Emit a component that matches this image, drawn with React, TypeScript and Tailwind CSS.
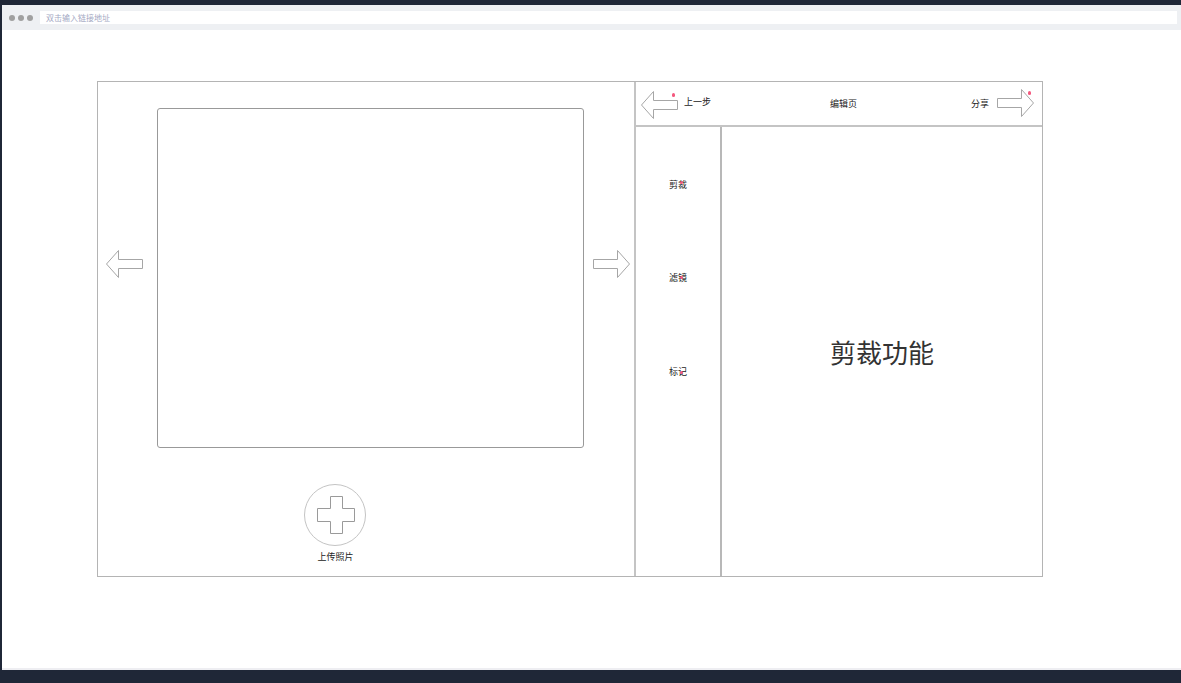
import React from 'react';

const Arrow: React.FC<{ dir: 'left' | 'right'; dot?: boolean }> = ({ dir, dot }) => (
  <div className="relative h-[28px] w-[37px] shrink-0">
    <svg width="37" height="28" viewBox="0 0 37 28" fill="white" stroke="#a6a6a6" strokeWidth="1">
      {dir === 'left' ? (
        <path d="M0.5 14 L12.5 0.5 V9.5 H36.5 V18.5 H12.5 V27.5 Z" />
      ) : (
        <path d="M36.5 14 L24.5 0.5 V9.5 H0.5 V18.5 H24.5 V27.5 Z" />
      )}
    </svg>
    {dot && <span className="absolute top-[2px] right-[3px] h-[4px] w-[3px] rounded-full bg-[#f4587e]" />}
  </div>
);

const MenuItem: React.FC<{ label: string; className: string; dotClass: string }> = ({ label, className, dotClass }) => (
  <div className={`flex justify-center ${className}`}>
    <span className="relative text-[9px] leading-[12px] text-[#222]">
      {label}
      <span className={`absolute right-[4px] h-[3px] w-[3px] rounded-full bg-[#f4587e] ${dotClass}`} />
    </span>
  </div>
);

export default function App() {
  return (
    <div
      className="flex h-[683px] w-[1181px] flex-col overflow-hidden bg-[#1f2737] pt-[5px] pb-[13px] pl-[2px]"
      style={{ fontFamily: '"Noto Sans CJK SC", "Liberation Sans", sans-serif' }}
    >
      <div className="flex flex-1 flex-col border-b-2 border-b-[#eeeef2] bg-white">
        {/* browser bar */}
        <div className="flex h-[25px] items-center bg-[#eef0f3] pr-[4px] pl-[7px]">
          <div className="flex gap-[3px]">
            <span className="h-[6px] w-[6px] rounded-full bg-[#a0a0a0]" />
            <span className="h-[6px] w-[6px] rounded-full bg-[#a0a0a0]" />
            <span className="h-[6px] w-[6px] rounded-full bg-[#a0a0a0]" />
          </div>
          <div className="ml-[7px] flex h-[13px] flex-1 items-center bg-white pl-[6px] text-[8px] text-[#a4a9c4]">
            双击输入链接地址
          </div>
        </div>

        {/* wireframe */}
        <div className="pt-[51px] pl-[95px]">
          <div className="flex h-[496px] w-[946px] border border-[#b4b4b4]">
            {/* left panel */}
            <div className="flex w-[538px] shrink-0 flex-col border-r-2 border-[#c4c4c4]">
              <div className="flex items-start pt-[26px] pl-[8px]">
                <div className="mt-[142px]">
                  <Arrow dir="left" />
                </div>
                <div className="mr-[9px] ml-[14px] h-[340px] w-[427px] rounded-[3px] border border-[#999]" />
                <div className="mt-[142px]">
                  <Arrow dir="right" />
                </div>
              </div>
              <div className="flex w-[474px] flex-col items-center pt-[36px]">
                <div className="flex h-[62px] w-[62px] items-center justify-center rounded-full border border-[#c4c4c4]">
                  <svg className="ml-[1px]" width="38" height="38" viewBox="0 0 38 38" fill="white" stroke="#9a9a9a" strokeWidth="1">
                    <path d="M13.5 0.5 H25.5 V12.5 H37.5 V25.5 H25.5 V37.5 H13.5 V25.5 H0.5 V12.5 H13.5 Z" />
                  </svg>
                </div>
                <span className="mt-[5px] ml-[1px] text-[9px] leading-[12px] text-[#222]">上传照片</span>
              </div>
            </div>

            {/* right panel */}
            <div className="flex flex-1 flex-col">
              <div className="flex h-[45px] shrink-0 items-center border-b-2 border-[#c4c4c4] pr-[8px] pl-[5px]">
                <div className="mt-[2px]">
                  <Arrow dir="left" dot />
                </div>
                <span className="mb-[3px] ml-[6px] text-[9px] leading-[12px] text-[#222]">上一步</span>
                <span className="ml-[119px] text-[9px] leading-[12px] text-[#222]">编辑页</span>
                <span className="ml-auto text-[9px] leading-[12px] text-[#222]">分享</span>
                <div className="mb-[2px] ml-[8px]">
                  <Arrow dir="right" dot />
                </div>
              </div>
              <div className="flex flex-1">
                <div className="flex w-[86px] shrink-0 flex-col border-r-2 border-[#b8b8b8]">
                  <MenuItem label="剪裁" className="mt-[52px]" dotClass="top-[2px]" />
                  <MenuItem label="滤镜" className="mt-[81px]" dotClass="top-[4px]" />
                  <MenuItem label="标记" className="mt-[82px]" dotClass="top-[5px]" />
                </div>
                <div className="flex flex-1 items-center justify-center">
                  <span className="text-[26px] leading-[36px] text-[#333]">剪裁功能</span>
                </div>
              </div>
            </div>
          </div>
        </div>
      </div>
    </div>
  );
}
